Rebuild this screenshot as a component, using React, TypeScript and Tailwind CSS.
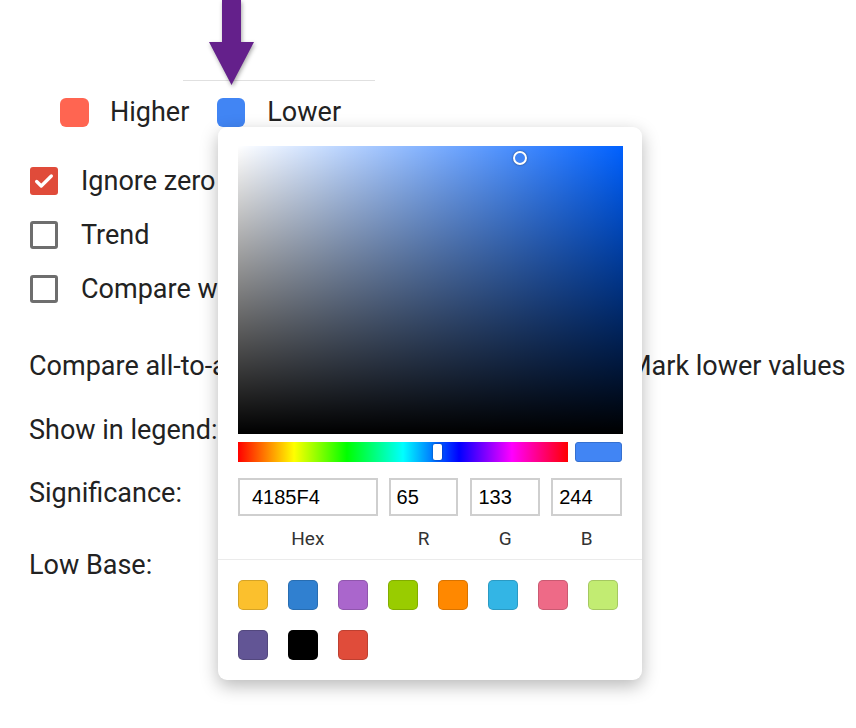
import React from "react";

const swatches = [
  "#FBC02D",
  "#3080D0",
  "#AA66CC",
  "#99CC00",
  "#FF8800",
  "#33B5E5",
  "#EE6A87",
  "#C2EC72",
  "#625595",
  "#000000",
  "#E04C3A",
];

const Checkbox: React.FC<{ checked?: boolean; label: string }> = ({ checked, label }) => (
  <div className="flex items-center h-[28px] gap-[23px]">
    {checked ? (
      <div className="w-[28px] h-[28px] rounded-[3px] bg-[#e04b3a] flex items-center justify-center">
        <svg width="22" height="22" viewBox="0 0 24 24" fill="none">
          <path d="M4 12.5l5 5L20 6.5" stroke="white" strokeWidth="3.6" strokeLinecap="round" strokeLinejoin="round" />
        </svg>
      </div>
    ) : (
      <div className="w-[28px] h-[28px] rounded-[3px] border-[3px] border-[#6e6e6e]" />
    )}
    <span className="whitespace-nowrap">{label}</span>
  </div>
);

const ColorPopover: React.FC = () => {
  return (
    <div className="absolute left-[218px] top-[127px] w-[424px] bg-white rounded-[9px] shadow-[0_6px_18px_rgba(0,0,0,0.28)] font-['Liberation_Sans',Arial,sans-serif]">
      <div className="px-[20px] pt-[19px]">
        {/* Saturation area */}
        <div className="relative w-[385px] h-[288px] bg-[#0061ff]">
          <div className="absolute inset-0 bg-gradient-to-r from-white to-transparent" />
          <div className="absolute inset-0 bg-gradient-to-b from-transparent to-black" />
          <div className="absolute left-[275px] top-[5px] w-[14px] h-[14px] rounded-full border-[2.5px] border-white shadow-[0_0_2px_rgba(0,0,0,0.6)] bg-[#4185F4]" />
        </div>

        {/* Hue + preview */}
        <div className="flex gap-[7px] mt-[8px]">
          <div className="relative w-[331px] h-[20px] bg-[linear-gradient(to_right,#ff0000_0%,#ffff00_17%,#00ff00_33%,#00ffff_50%,#0000ff_67%,#ff00ff_83%,#ff0000_100%)]">
            <div className="absolute left-[195px] top-[2px] w-[9px] h-[16px] rounded-[2px] bg-white shadow-[0_0_2px_rgba(0,0,0,0.5)]" />
          </div>
          <div className="w-[47px] h-[20px] rounded-[3px] bg-[#4185F4] border border-[#3570d0]" />
        </div>

        {/* Inputs */}
        <div className="flex mt-[16px] text-[20px] text-black">
          <div className="w-[140px] h-[38px] border-2 border-[#cfcfcf] flex items-center pl-[12px]">4185F4</div>
          <div className="w-[70px] h-[38px] border-2 border-[#cfcfcf] flex items-center pl-[6px] ml-[11px]">65</div>
          <div className="w-[70px] h-[38px] border-2 border-[#cfcfcf] flex items-center pl-[6px] ml-[12px]">133</div>
          <div className="w-[71px] h-[38px] border-2 border-[#cfcfcf] flex items-center pl-[6px] ml-[11px]">244</div>
        </div>
        <div className="flex mt-[11px] h-[24px] items-center text-[19px] text-[#333] font-['Roboto',sans-serif]">
          <div className="w-[140px] text-center">Hex</div>
          <div className="w-[70px] ml-[11px] text-center">R</div>
          <div className="w-[70px] ml-[12px] text-center">G</div>
          <div className="w-[71px] ml-[11px] text-center">B</div>
        </div>
      </div>

      <div className="mt-[8px] border-t border-[#ebebeb]" />

      {/* Swatches */}
      <div className="px-[20px] pt-[20px] pb-[20px] grid grid-cols-[repeat(8,30px)] gap-x-[20px] gap-y-[20px]">
        {swatches.map((c) => (
          <div
            key={c}
            className="w-[30px] h-[30px] rounded-[5px] border border-[rgba(0,0,0,0.15)]"
            style={{ backgroundColor: c }}
          />
        ))}
      </div>
    </div>
  );
};

export default function App() {
  return (
    <div className="relative w-[856px] h-[728px] bg-white overflow-hidden font-['Roboto',sans-serif] text-[27px] text-[#222]">
      {/* Top line */}
      <div className="h-[80px]" />
      <div className="ml-[183px] w-[192px] border-t border-[#e0e0e0]" />

      {/* Legend */}
      <div className="flex items-center h-[28px] mt-[17px] ml-[60px]">
        <div className="w-[29px] h-[29px] rounded-[6px] bg-[#ff6551]" />
        <span className="ml-[21px]">Higher</span>
        <div className="w-[28px] h-[29px] rounded-[6px] bg-[#4185F4] ml-[28px]" />
        <span className="ml-[22px]">Lower</span>
      </div>

      {/* Options */}
      <div className="ml-[30px] mt-[41px] flex flex-col gap-[26px]">
        <Checkbox checked label="Ignore zero values" />
        <Checkbox label="Trend" />
        <Checkbox label="Compare with previous period" />
      </div>

      <div className="ml-[29px] mt-[47px] flex items-center h-[32px]">
        <span className="w-[599px] whitespace-nowrap">Compare all-to-all:</span>
        <span className="whitespace-nowrap">Mark lower values</span>
      </div>
      <div className="ml-[29px] mt-[32px] h-[32px] flex items-center">Show in legend:</div>
      <div className="ml-[29px] mt-[31px] h-[32px] flex items-center">Significance:</div>
      <div className="ml-[29px] mt-[40px] h-[32px] flex items-center">Low Base:</div>

      {/* Arrow pointer */}
      <svg className="absolute left-[205px] top-0 drop-shadow-[1px_2px_2px_rgba(0,0,0,0.35)]" width="54" height="90" viewBox="0 0 54 90">
        <path d="M17 0h19v42h13L26.5 85 4 42h13z" fill="#64208b" />
      </svg>

      <ColorPopover />
    </div>
  );
}
